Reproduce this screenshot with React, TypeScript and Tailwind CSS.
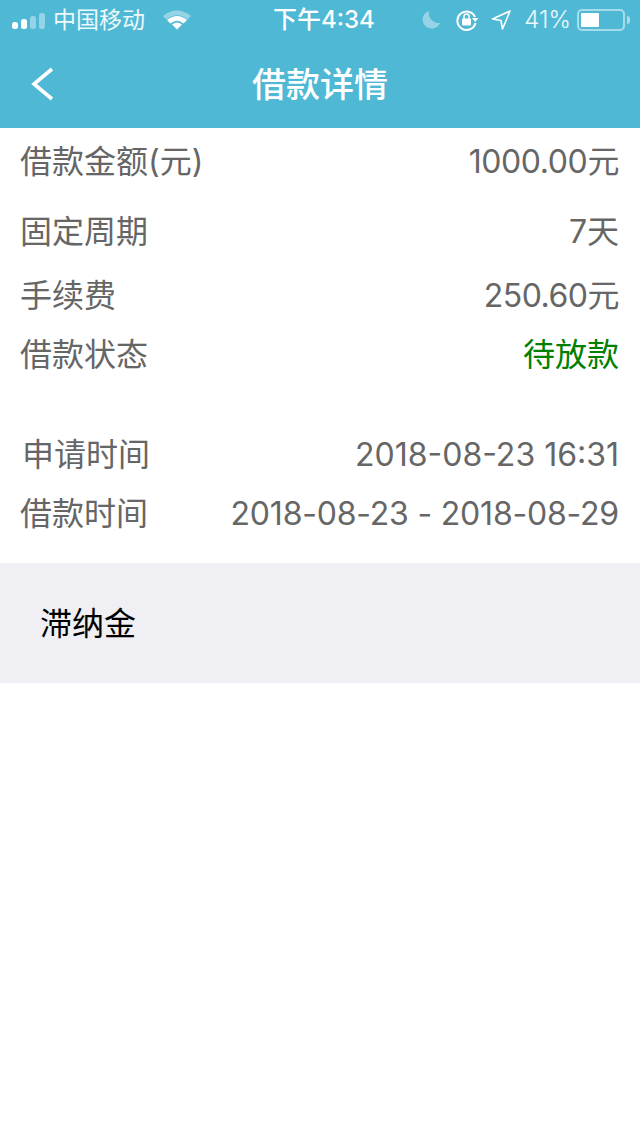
import React from "react";

const font = "font-['Inter','Noto_Sans_CJK_SC',sans-serif]";

const StatusBar = () => (
  <div className="h-10 flex items-center pl-3 pr-[10px] text-white">
    <div className="flex items-center w-[200px] shrink-0">
      <svg width="34" height="16" viewBox="0 0 34 16" className="mt-[1px]">
        <rect x="0" y="9" width="6" height="7" rx="2.5" fill="#fff" />
        <rect x="9" y="6" width="6" height="10" rx="2.5" fill="#fff" />
        <rect x="18" y="3" width="6" height="13" rx="2.5" fill="#fff" fillOpacity="0.4" />
        <rect x="27" y="0" width="6" height="16" rx="2.5" fill="#fff" fillOpacity="0.4" />
      </svg>
      <span className="text-[23px] leading-none text-white/90 ml-[7px] mt-[1px]">中国移动</span>
      <svg width="30" height="22" viewBox="0 0 30 22" className="ml-[18px]">
        <path d="M0 7 Q14 -4 28 7 L24.5 10.5 Q14 2 3.5 10.5 Z" fill="#fff" fillOpacity="0.4" />
        <path d="M4 11 Q14 3 24 11 L20.5 14.5 Q14 9 7.5 14.5 Z" fill="#fff" />
        <path d="M9 15.5 Q14 11.5 19 15.5 L14 20.5 Z" fill="#fff" />
      </svg>
    </div>
    <div className="text-[24px] leading-none font-medium ml-[61px] whitespace-nowrap">下午4:34</div>
    <div className="flex items-center ml-auto">
      <svg width="20" height="20" viewBox="0 0 20 20" className="mr-[14px]">
        <path d="M8 1 A9 9 0 1 0 19 13 A10 10 0 0 1 8 1 Z" fill="#fff" fillOpacity="0.4" />
      </svg>
      <svg width="24" height="24" viewBox="0 0 24 24" fill="none" className="mr-[12px]">
        <path d="M20 9 A9.2 9.2 0 1 0 20.5 15" stroke="#fff" strokeWidth="2" />
        <path d="M17 10 L23.5 10 L20.2 14 Z" fill="#fff" />
        <rect x="7" y="10.5" width="9" height="7" rx="1" fill="#fff" />
        <path d="M9 11 V8.5 A2.5 2.5 0 0 1 14 8.5 V11" stroke="#fff" strokeWidth="1.5" />
      </svg>
      <svg width="20" height="20" viewBox="0 0 20 20" fill="none" className="mr-[13px]">
        <path d="M19 1 L1.5 9 L10 10.5 L11.5 19 Z" stroke="#fff" strokeWidth="1.6" strokeLinejoin="round" />
      </svg>
      <span className="text-[24px] leading-none font-light text-white/90 mr-[6px]">41%</span>
      <div className="w-[48px] h-[22px] border-2 border-white/50 rounded-[5px] p-[2px]">
        <div className="w-[18px] h-full bg-white rounded-[1px]" />
      </div>
      <div className="w-[3px] h-[8px] bg-white/50 rounded-r-sm ml-[2px]" />
    </div>
  </div>
);

const Row = ({
  label,
  value,
  className,
  valueClass = "text-[#666666]",
  labelClass = "",
}: {
  label: string;
  value: string;
  className: string;
  valueClass?: string;
  labelClass?: string;
}) => (
  <div className={`flex items-center justify-between pl-[20px] pr-[21px] ${className}`}>
    <span className={`text-[32px] leading-none text-[#666666] ${labelClass}`}>{label}</span>
    <span className={`text-[32px] leading-none ${valueClass}`}>{value}</span>
  </div>
);

export default function App() {
  return (
    <div className={`w-[640px] h-[1136px] bg-white ${font}`}>
      <div className="bg-[#4fb8d5] h-[128px]">
        <StatusBar />
        <div className="relative h-[88px] flex items-center justify-center">
          <svg width="28" height="36" viewBox="0 0 28 36" fill="none" className="absolute left-[29px] top-[26px]">
            <path d="M23 3 L5 18 L23 33" stroke="#fff" strokeWidth="3.6" />
          </svg>
          <span className="text-[34px] leading-none font-medium text-white mt-[2px]">借款详情</span>
        </div>
      </div>
      <div className="flex flex-col">
        <Row label="借款金额(元)" value="1000.00元" valueClass="text-[#666666] tracking-[-0.4px]" className="h-[68px]" />
        <Row label="固定周期" value="7天" className="h-[66px] mt-[3px]" />
        <Row label="手续费" value="250.60元" valueClass="text-[#666666] tracking-[-0.5px]" className="h-[60px] mt-[1px]" />
        <Row label="借款状态" value="待放款" valueClass="text-[#008000]" className="h-[60px] -mt-[1px]" />
        <Row label="申请时间" value="2018-08-23 16:31" labelClass="ml-[2px]" className="h-[60px] mt-[40px]" />
        <Row label="借款时间" value="2018-08-23 - 2018-08-29" valueClass="text-[#666666] tracking-[-0.2px]" className="h-[60px] -mt-[1px]" />
      </div>
      <div className="bg-[#efeff4] h-[120px] mt-[19px] flex items-center pl-[40px]">
        <span className="text-[32px] leading-none text-black mt-[2px]">滞纳金</span>
      </div>
    </div>
  );
}
